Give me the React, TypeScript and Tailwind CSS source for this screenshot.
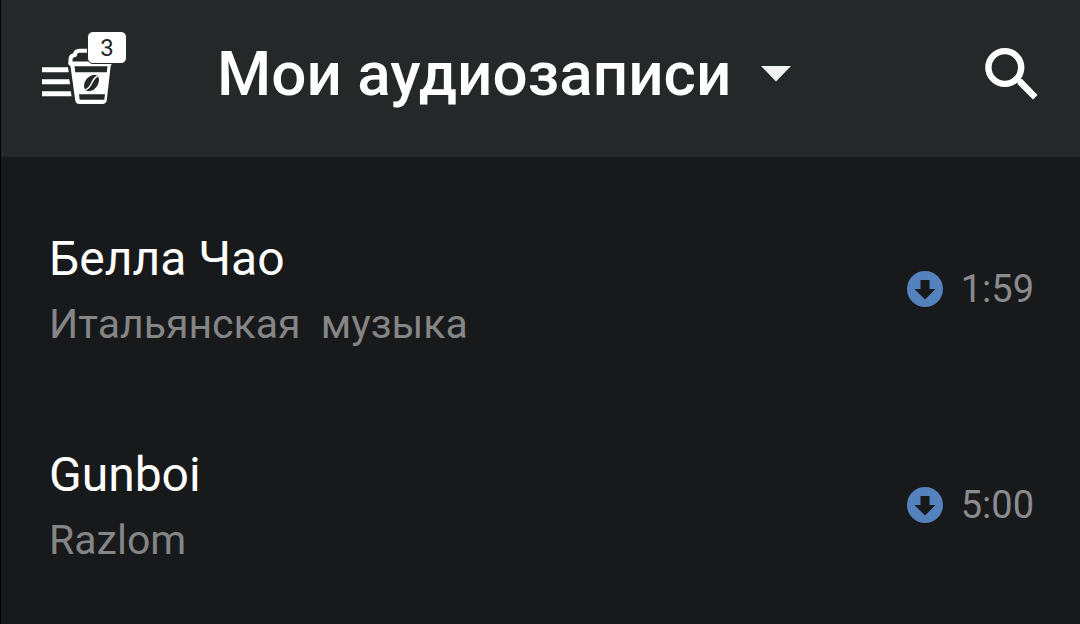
type Track = {
  title: string;
  artist: string;
  duration: string;
};

const tracks: Track[] = [
  { title: 'Белла Чао', artist: 'Итальянская  музыка', duration: '1:59' },
  { title: 'Gunboi', artist: 'Razlom', duration: '5:00' },
];

function CoffeeMenuIcon() {
  return (
    <svg viewBox="0 14 72 60" className="block h-[60px] w-[72px]" aria-hidden="true">
      <path
        d="M0 37.2h26l.8 5H0zM0 49.2h27.3l.8 5H0zM0 61.2h28.8l.8 5H0z"
        fill="#fff"
      />
      {/* lid */}
      <path
        d="M28.5 34v-4.5c0-3 1.5-4.3 4.5-4.500c0-3 2-4.300 4.500-4.300H52"
        fill="none"
        stroke="#fff"
        strokeWidth="4"
        strokeLinejoin="round"
      />
      <path d="M26.5 31.5h43v3.500l-1.500 1h-40l-1.500-1.500z" fill="#fff" />
      {/* cup */}
      <path d="M28 33h41l-4.200 37c-.3 2.600-1.800 4-4.500 4H37.500c-2.700 0-4-1.400-4.300-4z" fill="#fff" />
      <path d="M32.500 36.300h33l-.7 6H33.300zM37 64.300h26l-.7 5.500H37.700z" fill="#242829" />
      {/* bean */}
      <g transform="rotate(38 49.5 53)">
        <ellipse cx="49.5" cy="53" rx="6.3" ry="9.2" fill="#242829" />
        <path d="M50 44c-3.500 6 3 11-1 18" fill="none" stroke="#fff" strokeWidth="1.5" />
      </g>
    </svg>
  );
}

function SearchIcon() {
  return (
    <svg viewBox="0 0 54 54" className="block size-[54px]" aria-hidden="true">
      <circle cx="19.8" cy="20.5" r="16.4" fill="none" stroke="#fff" strokeWidth="6.4" />
      <path d="M32.500 34.500l1-2.500h3.500L52.500 48l-4.500 4.500L32.500 37z" fill="#fff" />
    </svg>
  );
}

function DownloadedIcon() {
  return (
    <svg viewBox="0 0 36 36" className="block size-9" role="img" aria-label="Загружено">
      <circle cx="18" cy="18" r="18" fill="#5482bd" />
      <path d="M13.500 9h9v9H28.500L18 28.500 7.500 18h6z" fill="#17191b" />
    </svg>
  );
}

function TrackRow({ title, artist, duration }: Track) {
  return (
    <li className="flex items-center justify-between pr-[46px] pl-12">
      <div>
        <div className="text-[48px] leading-[64px] text-white">{title}</div>
        <div className="text-[41px] leading-[66px] whitespace-pre text-[#858585]">{artist}</div>
      </div>
      <div className="flex items-center gap-[18px] pb-[7px]">
        <DownloadedIcon />
        <span className="text-[38px] leading-10 text-[#8b8b8f]">{duration}</span>
      </div>
    </li>
  );
}

export default function App() {
  return (
    <div className="min-h-screen border-l border-black bg-[#17191b] font-['Roboto','Liberation_Sans',sans-serif]">
      <header className="flex items-center bg-[#242829] pt-[34px] pr-[41px] pb-[43px] pl-[41px] text-white">
        <button type="button" aria-label="Меню" className="relative w-[85px]">
          <CoffeeMenuIcon />
          <span className="absolute -top-[13px] right-0 flex h-[33px] w-10 items-center justify-center rounded-md border border-[#242829] bg-white text-2xl text-[#242829]">
            3
          </span>
        </button>
        <button type="button" className="ml-[90px] flex items-center gap-[30px]">
          <h1 className="text-[62px] leading-[80px] font-medium">Мои аудиозаписи</h1>
          <svg viewBox="0 0 30 16" className="block h-4 w-[30px]" aria-hidden="true">
            <path d="M0 0h30L15 15.500z" fill="#f2f2f2" />
          </svg>
        </button>
        <button type="button" aria-label="Поиск" className="ml-auto">
          <SearchIcon />
        </button>
      </header>
      <main>
        <ul className="flex flex-col gap-[86px] pt-[70px]">
          {tracks.map((track) => (
            <TrackRow key={track.title} {...track} />
          ))}
        </ul>
      </main>
    </div>
  );
}
